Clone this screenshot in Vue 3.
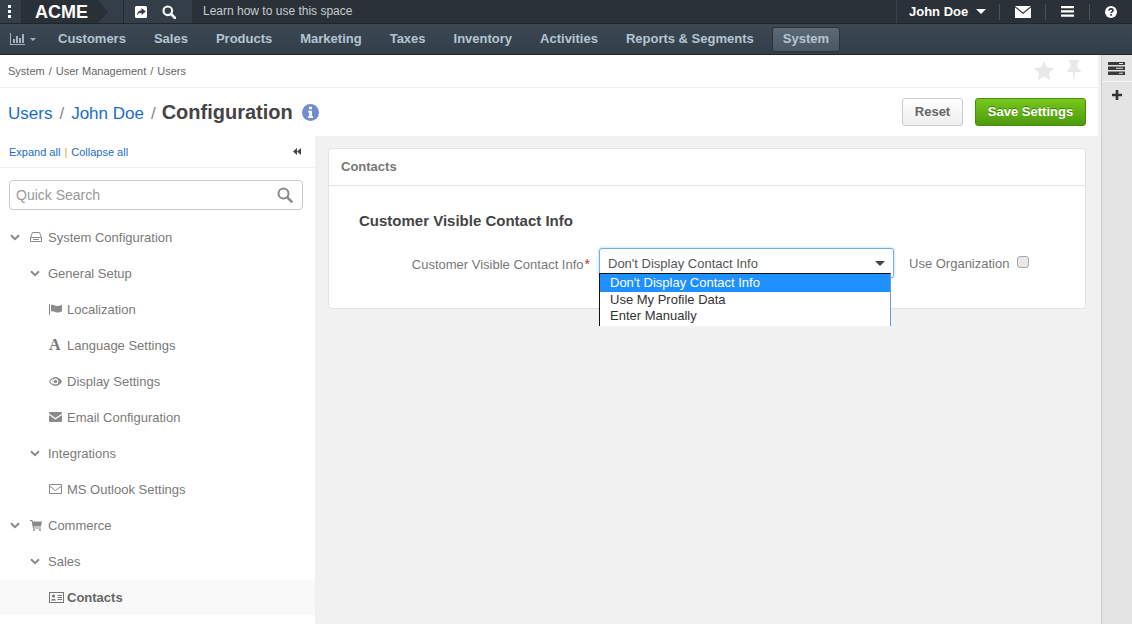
<template>
  <div class="page">
    <header class="topbar">
      <div class="brand">
        <div class="dots"><i></i><i></i><i></i></div>
        <div class="logo">ACME</div>
        <div class="quick">
          <svg width="14" height="14" viewBox="0 0 14 14"><path fill="#fff" fill-rule="evenodd" d="M2.500 1h9A1.500 1.500 0 0 1 13 2.500v9a1.500 1.500 0 0 1-1.500 1.500h-9A1.500 1.500 0 0 1 1 11.500v-9A1.500 1.500 0 0 1 2.500 1zM7.500 3v2.200C4.800 5.400 3 7.200 3 10.500c1-2 2.600-2.700 4.500-2.700V10l4.300-3.500z"/></svg>
          <svg width="14" height="14" viewBox="0 0 14 14"><circle cx="5.800" cy="5.800" r="4.300" fill="none" stroke="#fff" stroke-width="2.200"/><path d="M9 9l4 4" stroke="#fff" stroke-width="2.600" stroke-linecap="round"/></svg>
        </div>
      </div>
      <div class="learn">Learn how to use this space</div>
      <div class="user-area">
        <div class="user">John Doe <span class="caret"></span></div>
        <div class="tool mail">
          <svg width="16" height="12" viewBox="0 0 16 12"><path fill="#fff" d="M0 0h16L8 6.500zM0 1.400l8 6.500 8-6.500V12H0z"/></svg>
        </div>
        <div class="tool menu">
          <svg width="13" height="11" viewBox="0 0 13 11"><path fill="#fff" d="M0 0h13v2.200H0zM0 4.200h13v2.200H0zM0 8.500h13v2.200H0z"/></svg>
        </div>
        <div class="tool help">
          <svg width="12" height="12" viewBox="0 0 12 12"><circle cx="6" cy="6" r="6" fill="#fff"/><path d="M4 4.600C4 3.400 5 2.900 6 2.900s2 .6 2 1.600c0 1.300-2 1.300-2 2.600" fill="none" stroke="#2b3239" stroke-width="1.600"/><rect x="5.100" y="8" width="1.800" height="1.700" fill="#2b3239"/></svg>
        </div>
      </div>
    </header>

    <nav class="mainnav">
      <div class="chart">
        <svg width="15" height="12" viewBox="0 0 15 12"><path fill="#9fb3c2" d="M0 0h1v11h14v1H0zM3 6h2v4H3zM6 3h2v7H6zM9 5h2v5H9zM12 1h2v9h-2z"/></svg>
        <span class="caret small"></span>
      </div>
      <a v-for="item in navItems" :key="item" class="nav-item" :class="{ active: item === 'System' }">{{ item }}</a>
    </nav>

    <div class="body">
      <div class="main">
        <div class="crumbs">
          <span>System</span><em>/</em><span>User Management</span><em>/</em><span>Users</span>
          <div class="crumb-icons">
            <svg width="20" height="19" viewBox="0 0 20 19"><path fill="#e8e8e8" d="M10 0l3 6.300 7 .9-5.100 4.800 1.300 6.900L10 15.600 3.800 19l1.300-6.900L0 7.200l7-.9z"/></svg>
            <svg width="14" height="20" viewBox="0 0 14 20"><path fill="#e8e8e8" d="M2 0h10v2h-1.500v6c2 1 3.500 2.500 3.500 4H8l-.5 7h-1L6 12H0c0-1.500 1.500-3 3.500-4V2H2z"/></svg>
          </div>
        </div>

        <div class="titlebar">
          <div class="title">
            <a>Users</a><em>/</em><a>John Doe</a><em class="last">/</em><strong>Configuration</strong>
            <svg class="info" width="17" height="17" viewBox="0 0 17 17"><circle cx="8.500" cy="8.500" r="8.500" fill="#6d8dd0"/><path fill="#fff" d="M7 2.800h3v2.400H7zM6.200 6.700h3.800v5.300h1v1.900H6.200V12h1V8.500h-1z"/></svg>
          </div>
          <div class="actions">
            <button class="btn reset">Reset</button>
            <button class="btn save">Save Settings</button>
          </div>
        </div>

        <div class="columns">
          <aside class="sidebar">
            <div class="expand">
              <span><a>Expand all</a><i>|</i><a>Collapse all</a></span>
              <svg width="8" height="7" viewBox="0 0 8 7"><path fill="#444" d="M4 0v7L0 3.500zM8 0v7L4 3.500z"/></svg>
            </div>
            <div class="search">
              <span>Quick Search</span>
              <svg width="16" height="16" viewBox="0 0 16 16"><circle cx="6.500" cy="6.500" r="5" fill="none" stroke="#8a8a8a" stroke-width="2"/><path d="M10.300 10.300l4.300 4.300" stroke="#8a8a8a" stroke-width="2.600" stroke-linecap="round"/></svg>
            </div>
            <ul class="tree">
              <li v-for="node in tree" :key="node.label" :class="['lvl' + node.level, { current: node.current }]">
                <svg v-if="node.open" class="chev" width="10" height="7" viewBox="0 0 10 7"><path d="M1 1.200l4 4 4-4" fill="none" stroke="#8a8a8a" stroke-width="2"/></svg>
                <svg v-if="node.icon === 'drive'" class="ico" width="12" height="10" viewBox="0 0 12 10"><path d="M.5 5.500L2.500.5h7l2 5v4H.5zM.5 5.500h11M3 7.500h6" fill="none" stroke="#8a8a8a"/></svg>
                <svg v-else-if="node.icon === 'flag'" class="ico" width="13" height="11" viewBox="0 0 13 11"><path fill="#8a8a8a" d="M0 0h1v11H0zM2 1c3-1 4 1 6 1 2 0 3-.5 5-1v6.500c-2 .5-3 1-5 1s-3-2-6-1z"/></svg>
                <span v-else-if="node.icon === 'font'" class="ico letter">A</span>
                <svg v-else-if="node.icon === 'eye'" class="ico" width="13" height="9" viewBox="0 0 13 9"><path fill="#8a8a8a" fill-rule="evenodd" d="M6.500 0C9.500 0 12 2.200 13 4.500 12 6.800 9.500 9 6.500 9S1 6.800 0 4.500C1 2.200 3.500 0 6.500 0zm0 1.600a2.900 2.900 0 1 0 0 5.800 2.900 2.900 0 0 0 0-5.800zM1.200 4.500C2 6 3.200 7 4.300 7.500 3 6 3 3 4.300 1.500 3.200 2 2 3 1.200 4.500z"/><circle cx="6.500" cy="4.500" r="1.700" fill="#8a8a8a"/></svg>
                <svg v-else-if="node.icon === 'mail'" class="ico" width="13" height="10" viewBox="0 0 13 10"><path fill="#8a8a8a" d="M1 0h11a1 1 0 0 1 1 1v.5L6.500 6 0 1.500V1a1 1 0 0 1 1-1zM0 3l6.500 4.500L13 3v6a1 1 0 0 1-1 1H1a1 1 0 0 1-1-1z"/></svg>
                <svg v-else-if="node.icon === 'mail-o'" class="ico" width="13" height="10" viewBox="0 0 13 10"><path d="M.5.500h12v9H.5zM.5 2l6 4.500 6-4.500" fill="none" stroke="#8a8a8a"/></svg>
                <svg v-else-if="node.icon === 'cart'" class="ico" width="12" height="11" viewBox="0 0 12 11"><path fill="#8a8a8a" d="M0 0h2.400l.3 1.400H12l-1 5H3.700l.2 1h7v1H3L1.600 1H0z"/><circle cx="4" cy="10" r="1" fill="#8a8a8a"/><circle cx="10" cy="10" r="1" fill="#8a8a8a"/></svg>
                <svg v-else-if="node.icon === 'card'" class="ico" width="15" height="11" viewBox="0 0 15 11"><path fill="#777" fill-rule="evenodd" d="M0 0h15v11H0zM1 1v9h13V1z"/><circle cx="4.500" cy="4" r="1.600" fill="#777"/><path fill="#777" d="M2 8.500C2 6.500 7 6.500 7 8.500zM8.500 3H13v1H8.500zM8.500 5H13v1H8.500zM8.500 7H13v1H8.500z"/></svg>
                <span>{{ node.label }}</span>
              </li>
            </ul>
          </aside>

          <section class="content">
            <div class="card">
              <div class="card-head">Contacts</div>
              <div class="card-body">
                <h3>Customer Visible Contact Info</h3>
                <div class="field">
                  <label class="field-label">Customer Visible Contact Info<b>*</b></label>
                  <div class="select">
                    <span>Don't Display Contact Info</span>
                    <span class="select-caret"></span>
                    <ul class="options">
                      <li v-for="(opt, i) in options" :key="opt" :class="{ selected: i === 0 }">{{ opt }}</li>
                    </ul>
                  </div>
                  <span class="use-org">Use Organization</span>
                  <span class="check"></span>
                </div>
              </div>
            </div>
          </section>
        </div>
      </div>

      <div class="rail">
        <div class="rail-btn">
          <svg width="17" height="13" viewBox="0 0 17 13"><path fill="#3a3a3a" d="M0 0h17v3H0zM0 4.500h17v3.500H0zM0 9.500h17V13H0z"/><path fill="#e4e4e4" d="M11 1h4v1h-4zM8 5.700h7v1H8zM11 10.700h4v1h-4z"/></svg>
        </div>
        <div class="rail-btn plus">
          <svg width="10" height="10" viewBox="0 0 10 10"><path fill="#333" d="M3.700 0h2.600v3.700H10v2.600H6.300V10H3.700V6.300H0V3.700h3.700z"/></svg>
        </div>
      </div>
    </div>
  </div>
</template>

<script setup>
const navItems = ['Customers', 'Sales', 'Products', 'Marketing', 'Taxes', 'Inventory', 'Activities', 'Reports & Segments', 'System']

const tree = [
  { label: 'System Configuration', level: 0, open: true, icon: 'drive' },
  { label: 'General Setup', level: 1, open: true },
  { label: 'Localization', level: 2, icon: 'flag' },
  { label: 'Language Settings', level: 2, icon: 'font' },
  { label: 'Display Settings', level: 2, icon: 'eye' },
  { label: 'Email Configuration', level: 2, icon: 'mail' },
  { label: 'Integrations', level: 1, open: true },
  { label: 'MS Outlook Settings', level: 2, icon: 'mail-o' },
  { label: 'Commerce', level: 0, open: true, icon: 'cart' },
  { label: 'Sales', level: 1, open: true },
  { label: 'Contacts', level: 2, icon: 'card', current: true }
]

const options = ["Don't Display Contact Info", 'Use My Profile Data', 'Enter Manually']
</script>

<style>
html, body { margin: 0; overflow: hidden; background: #fff; }
</style>

<style scoped>
.page {
  width: 1132px;
  height: 624px;
  overflow: hidden;
  display: flex;
  flex-direction: column;
  font-family: "Liberation Sans", Arial, sans-serif;
  font-size: 13px;
  color: #444;
}

/* top bar */
.topbar {
  height: 24px;
  flex: none;
  box-sizing: border-box;
  display: flex;
  align-items: stretch;
  background: #2b3138;
  border-bottom: 1px solid #1f252b;
  color: #fff;
}
.brand {
  width: 192px;
  flex: none;
  display: flex;
  background: #343e48;
}
.dots {
  width: 21px;
  display: flex;
  flex-direction: column;
  align-items: center;
  justify-content: center;
  gap: 2px;
  padding-right: 2px;
  box-sizing: border-box;
}
.dots i { width: 3px; height: 3px; background: #fff; }
.logo {
  width: 77px;
  box-sizing: border-box;
  padding-left: 14px;
  font-size: 18px;
  font-weight: 700;
  line-height: 24px;
  background: #2a3038;
  position: relative;
}
.logo::after {
  content: "";
  position: absolute;
  left: 77px;
  top: 0;
  border-left: 10px solid #2a3038;
  border-top: 12px solid transparent;
  border-bottom: 11px solid transparent;
}
.quick {
  flex: 1;
  margin-left: 25px;
  box-sizing: border-box;
  padding-left: 10px;
  display: flex;
  align-items: center;
  gap: 14px;
  border-left: 1px solid #242a30;
}
.learn { margin-left: 11px; line-height: 23px; font-size: 12px; color: #c8ccd0; }
.user-area { margin-left: auto; display: flex; align-items: center; border-left: 1px solid #3b444d; }
.user {
  width: 102px;
  box-sizing: border-box;
  padding-left: 12px;
  font-weight: 700;
  font-size: 13px;
  display: flex;
  align-items: center;
  gap: 8px;
}
.caret {
  display: inline-block;
  border-top: 5px solid #fff;
  border-left: 5px solid transparent;
  border-right: 5px solid transparent;
}
.caret.small { border-top: 3px solid #9fb3c2; border-left-width: 3px; border-right-width: 3px; }
.tool {
  height: 16px;
  display: flex;
  align-items: center;
  justify-content: center;
  border-left: 1px solid #4a525a;
  box-sizing: border-box;
}
.tool.mail { width: 46px; }
.tool.menu { width: 44px; }
.tool.help { width: 43px; }

/* main nav */
.mainnav {
  height: 31px;
  flex: none;
  display: flex;
  align-items: center;
  background: linear-gradient(#3b4853, #323e48);
  border-bottom: 1px solid #1f272e;
  box-sizing: border-box;
}
.chart { width: 58px; box-sizing: border-box; padding-left: 10px; display: flex; align-items: center; gap: 5px; }
.nav-item {
  font-weight: 700;
  font-size: 13px;
  color: #b4c5d2;
  margin-right: 28px;
  line-height: 24px;
}
.nav-item.active {
  margin-left: -10px;
  padding: 0 10px;
  background: linear-gradient(#5b6a76, #4a5762);
  border: 1px solid #29323a;
  border-radius: 3px;
  height: 25px;
  line-height: 22px;
  box-sizing: border-box;
}

/* page */
.body { flex: 1; display: flex; min-height: 0; }
.main { flex: 1; min-width: 0; display: flex; flex-direction: column; border-right: 3px solid #f1f1f1; }
.crumbs {
  height: 33px;
  flex: none;
  box-sizing: border-box;
  display: flex;
  align-items: center;
  padding: 0 17px 0 8px;
  font-size: 11px;
  color: #666;
  border-bottom: 1px solid #eee;
}
.crumbs em { font-style: normal; margin: 0 4px; }
.crumb-icons { margin-left: auto; margin-top: -2px; display: flex; align-items: center; gap: 13px; }
.titlebar {
  height: 48px;
  flex: none;
  display: flex;
  align-items: center;
  justify-content: space-between;
  padding: 0 12px 0 8px;
}
.title { display: flex; align-items: center; font-size: 17px; }
.title a { color: #1a6dc9; padding-top: 3px; }
.title em { font-style: normal; color: #888; margin: 0 7px; padding-top: 3px; }
.title em.last { margin-right: 6px; }
.title strong { font-size: 20px; color: #444; font-weight: 700; }
.info { margin-left: 9px; }
.actions { display: flex; gap: 12px; }
.btn {
  height: 28px;
  font-family: inherit;
  font-size: 13px;
  font-weight: 700;
  border-radius: 3px;
  padding: 0 0 2px;
}
.reset {
  width: 61px;
  color: #666;
  background: linear-gradient(#fff, #eee);
  border: 1px solid #ccc;
}
.save {
  width: 111px;
  color: #fff;
  background: linear-gradient(#76c81a, #4d9a0c);
  border: 1px solid #478f0b;
  text-shadow: 0 -1px 0 #3d7f08;
}

.columns { flex: 1; display: flex; min-height: 0; }
.sidebar { width: 315px; flex: none; background: #fff; }
.expand {
  height: 32px;
  box-sizing: border-box;
  border-bottom: 1px solid #eee;
  padding: 0 14px 0 9px;
  display: flex;
  align-items: center;
  justify-content: space-between;
  font-size: 11px;
  color: #1a6dc9;
}
.expand i { font-style: normal; color: #e0a040; margin: 0 4px; }
.search {
  margin: 12px 12px 0 9px;
  height: 30px;
  box-sizing: border-box;
  border: 1px solid #c9c9c9;
  border-radius: 4px;
  padding: 0 9px 0 6px;
  display: flex;
  align-items: center;
  justify-content: space-between;
  font-size: 14px;
  color: #999;
}
.tree { list-style: none; margin: 9px 0 0; padding: 0; }
.tree li {
  height: 36px;
  display: flex;
  align-items: center;
  color: #7a7a7a;
}
.tree li.lvl0 { padding-left: 10px; }
.tree li.lvl1 { padding-left: 30px; }
.tree li.lvl2 { padding-left: 49px; }
.chev { margin-right: 8px; }
.ico { margin-right: 5px; }
.lvl0 .ico { margin-left: 2px; margin-right: 6px; }
.letter {
  width: 13px;
  font-family: "Liberation Serif", serif;
  font-weight: 700;
  font-size: 16px;
  line-height: 16px;
  color: #777;
}
.tree li.current { background: #f9f9f9; color: #666; font-weight: 700; height: 35px; margin-top: 1px; }
.tree li.current .ico { margin-right: 3px; }

.content { flex: 1; min-width: 0; background: #f1f1f1; padding: 12px 12px 0 13px; }
.card { background: #fff; border: 1px solid #e2e2e2; border-radius: 4px; height: 161px; box-sizing: border-box; }
.card-head {
  height: 37px;
  box-sizing: border-box;
  padding: 0 12px;
  line-height: 35px;
  font-weight: 700;
  color: #777;
  border-bottom: 1px solid #e2e2e2;
}
.card-body { padding: 0 30px; }
.card-body h3 { margin: 0; padding-top: 27px; font-size: 15px; line-height: 16px; color: #444; font-weight: 700; }
.field { display: flex; align-items: flex-start; margin-top: 19px; }
.field-label { width: 238px; text-align: right; line-height: 32px; color: #777; margin-left: -7px; white-space: nowrap; }
.field-label b { color: #b33; font-weight: 400; font-size: 14px; margin-left: 1px; }
.select {
  margin-left: 9px;
  width: 295px;
  height: 30px;
  flex: none;
  box-sizing: border-box;
  border: 1px solid #6eb0e6;
  border-radius: 3px;
  box-shadow: 0 0 3px rgba(80, 160, 230, .5);
  display: flex;
  align-items: center;
  padding: 0 8px;
  color: #555;
  position: relative;
  background: #fff;
}
.select-caret {
  margin-left: auto;
  border-top: 5px solid #444;
  border-left: 5px solid transparent;
  border-right: 5px solid transparent;
}
.options {
  position: absolute;
  left: -1px;
  top: 24px;
  width: 292px;
  height: 53px;
  overflow: hidden;
  box-sizing: border-box;
  list-style: none;
  margin: 0;
  padding: 0;
  background: #fff;
  border: 1px solid #6f96d8;
  border-left-color: #111;
  border-top-color: #111;
  border-bottom: 0;
  color: #333;
  font-size: 13px;
}
.options li { padding: 0 10px; height: 16px; line-height: 16px; }
.options li.selected { background: #1e90ff; color: #fff; height: 18px; line-height: 18px; }
.use-org { margin-left: 15px; line-height: 31px; color: #777; }
.check {
  margin: 8px 0 0 8px;
  width: 12px;
  height: 12px;
  box-sizing: border-box;
  border: 1px solid #aaa;
  border-radius: 3px;
  background: #e8e8e8;
}

.rail { width: 31px; flex: none; background: #e4e4e4; border-left: 1px solid #ccc; box-sizing: border-box; }
.rail-btn { height: 27px; display: flex; align-items: center; justify-content: center; border-bottom: 1px solid #f5f5f5; box-sizing: border-box; padding-right: 1px; }
.rail-btn.plus { border-bottom: 0; height: 26px; }
</style>
